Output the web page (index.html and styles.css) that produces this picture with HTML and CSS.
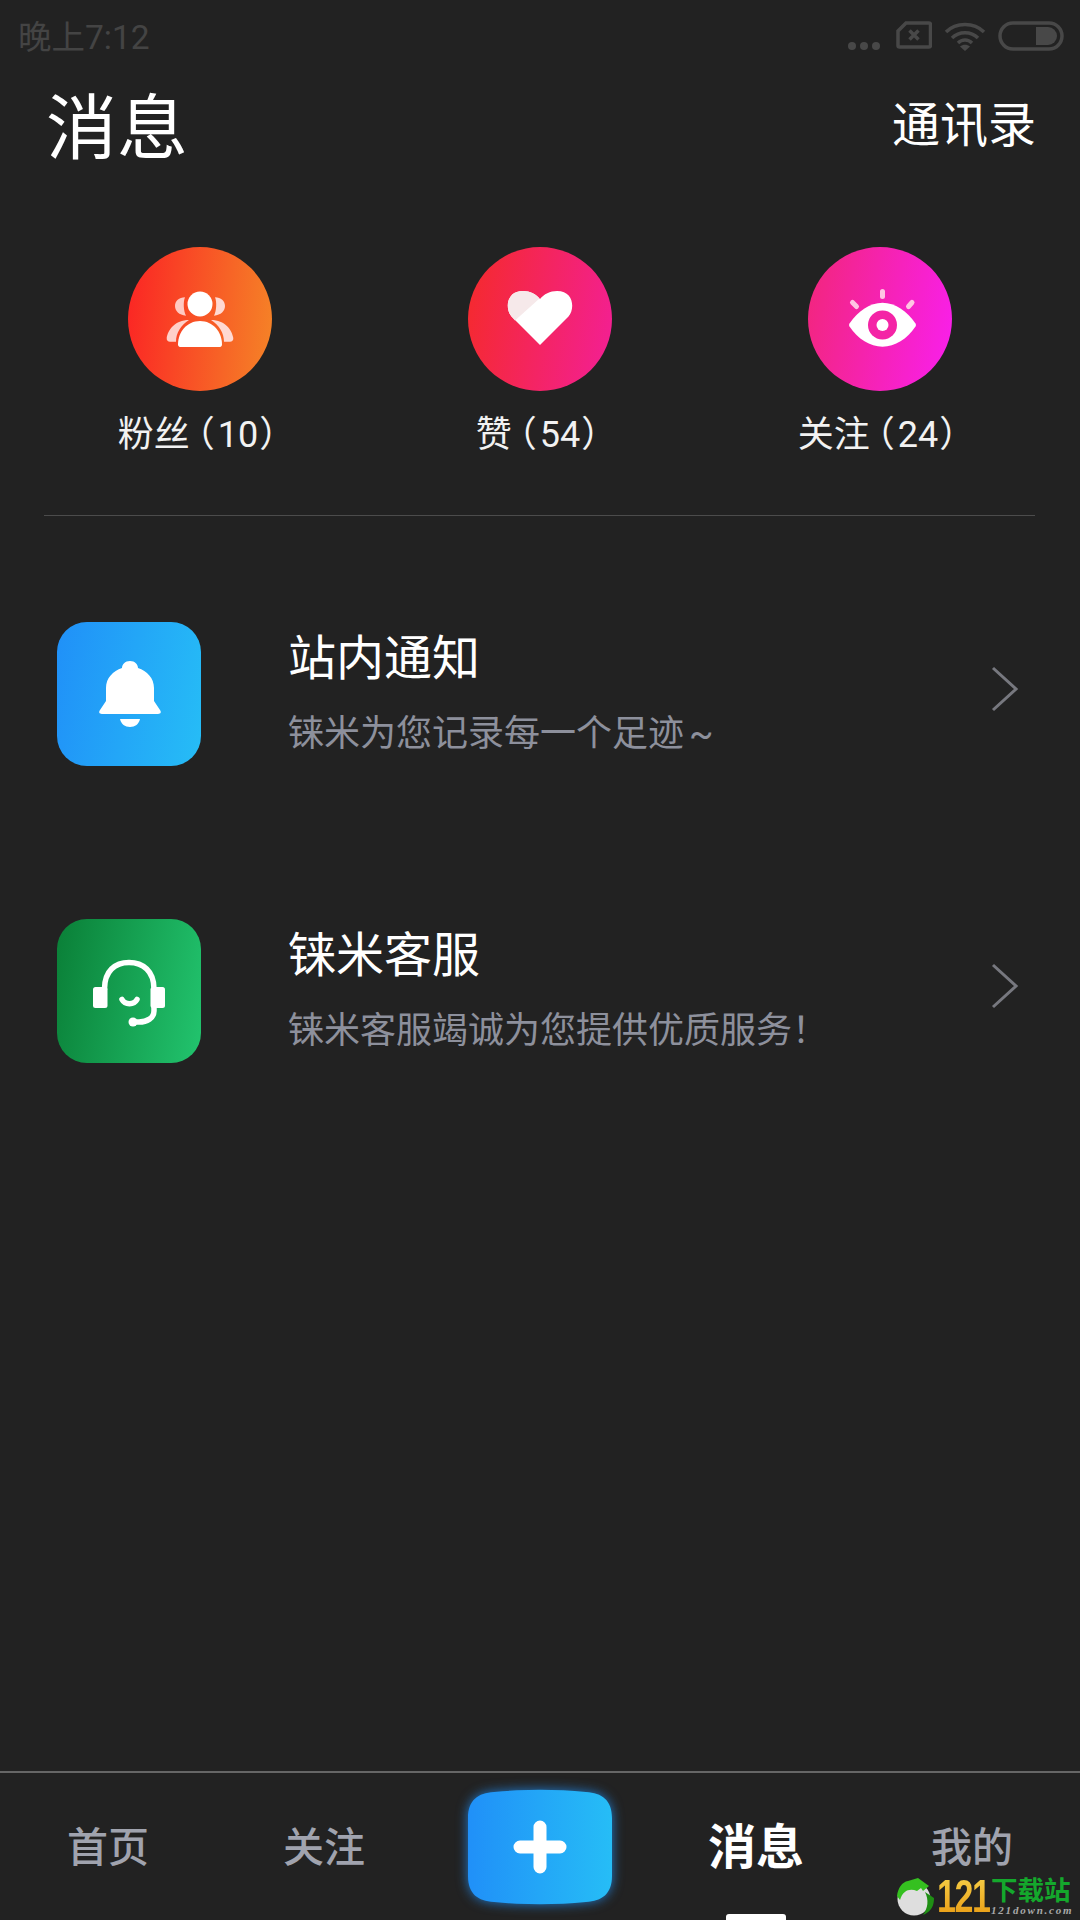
FILE: index.html
```html
<!DOCTYPE html>
<html lang="zh-CN">
<head>
  <meta charset="UTF-8">
  <meta name="viewport" content="width=device-width, initial-scale=1.0">
  <title>消息</title>
  <link rel="stylesheet" href="styles.css">
</head>
<body>
  <div class="page">
    <div class="status-bar">
      <span class="status-time">晚上7:12</span>
      <div class="status-icons">
        <svg class="ic-dots" width="34" height="10" viewBox="0 0 34 10"><circle cx="5" cy="5" r="4"/><circle cx="17" cy="5" r="4"/><circle cx="29" cy="5" r="4"/></svg>
        <svg class="ic-sim" width="36" height="28" viewBox="0 0 36 28"><path d="M10 2H33a1.500 1.500 0 0 1 1.500 1.500V24.500A1.500 1.500 0 0 1 33 26H3.500A1.500 1.500 0 0 1 2 24.500V10Z"/><path d="M13.500 9.500L22.500 18.500M22.500 9.500L13.500 18.500"/></svg>
        <svg class="ic-wifi" width="42" height="30" viewBox="0 0 42 30"><path d="M2 11C12 1 30 1 40 11M8 17C15 10 27 10 34 17M14 22C18 18 24 18 28 22"/><path class="solid" d="M21 30L16 25.500C19 23 23 23 26 25.500Z"/></svg>
        <svg class="ic-batt" width="66" height="30" viewBox="0 0 66 30"><rect x="2" y="2" width="62" height="26" rx="13"/><path class="solid" d="M38 6H50A9 9 0 0 1 59 15A9 9 0 0 1 50 24H38Z"/></svg>
      </div>
    </div>

    <header class="top">
      <h1>消息</h1>
      <span class="top-link">通讯录</span>
    </header>

    <section class="stats">
      <div class="stat">
        <div class="circle c-fans">
          <svg width="144" height="144" viewBox="0 0 144 144">
            <path fill="#ffc9c2" d="M57 50.300C51 50.300 47 54 47 59C47 64 51 68 58 68.700C55.500 64 55 55 57 50.300Z"/>
            <path fill="#ffd9d2" d="M87 50.300C93 50.300 97 54 97 59C97 64 93 68 86 68.700C88.500 64 89 55 87 50.300Z"/>
            <path fill="#ffd0c8" d="M61 73C47 73 40 83 38.700 91C38.500 93.500 40 94.700 42 94.700H48C48 86 53 78 61 73Z"/>
            <path fill="#ffd9d2" d="M83 73C97 73 104 83 105.300 91C105.500 93.500 104 94.700 102 94.700H96C96 86 91 78 83 73Z"/>
            <circle fill="#fff" cx="72" cy="57" r="12.500"/>
            <path fill="#fff" d="M72 74C59 74 50 85 50 97.500C50 99 51 100 52 100H92C93 100 94 99 94 97.500C94 85 85 74 72 74Z"/>
          </svg>
        </div>
        <span class="stat-label">粉丝<span class="paren-l">（</span>10<span class="paren-r">）</span></span>
      </div>
      <div class="stat">
        <div class="circle c-like">
          <svg width="144" height="144" viewBox="0 0 144 144">
            <path fill="#fff" d="M72 98L43.500 69.500C37 62 38 44 55 44C62 44 68 47 72 52C76 47 82 44 89 44C106 44 107 62 100.500 69.500Z"/>
            <path fill="#f6e9ea" d="M71.500 51.500C68 47 62 44 55 44C38 44 37 62 43.500 69.500L47 73.500Z"/>
          </svg>
        </div>
        <span class="stat-label">赞<span class="paren-l">（</span>54<span class="paren-r">）</span></span>
      </div>
      <div class="stat">
        <div class="circle c-follow">
          <svg width="144" height="144" viewBox="0 0 144 144">
            <path stroke="#ffc5e3" stroke-width="5" stroke-linecap="round" d="M74.500 44.500V49.500M44.500 55.500L48.500 59.500M104 55.500L100.500 59.500"/>
            <path fill="#fff" d="M41.500 76.500C50 64 62 55.700 74.500 55.700C87 55.700 99 64 107.500 76.500Q108.500 78 107.500 79.500C99 92 87 99.700 74.500 99.700C62 99.700 50 92 41.500 79.500Q40.500 78 41.500 76.500Z"/>
            <circle fill="#f424a6" cx="74.500" cy="78" r="14.500"/>
            <circle fill="#fff" cx="74.500" cy="78" r="6"/>
          </svg>
        </div>
        <span class="stat-label">关注<span class="paren-l">（</span>24<span class="paren-r">）</span></span>
      </div>
    </section>

    <div class="divider"></div>

    <section class="rows">
      <div class="row">
        <div class="tile t-blue">
          <svg width="144" height="144" viewBox="0 0 144 144">
            <path fill="#fff" d="M73 39C78 39 81 42.500 81 46C90 49 97 56 97 66V79L103 88C105 91 103 92 100 92H46C43 92 41 91 43 88L49 79V66C49 56 56 49 65 46C65 42.500 68 39 73 39Z"/>
            <path fill="#fff" d="M63 97H83C82 102 78 105 73 105C68 105 64 102 63 97Z"/>
          </svg>
        </div>
        <div class="row-text">
          <div class="row-title">站内通知</div>
          <div class="row-sub">铼米为您记录每一个足迹 ~</div>
        </div>
        <svg class="chev" width="28" height="46" viewBox="0 0 28 46"><path d="M2 2L25 23L2 44"/></svg>
      </div>
      <div class="row">
        <div class="tile t-green">
          <svg width="144" height="144" viewBox="0 0 144 144">
            <rect fill="#fff" x="36" y="68" width="14.500" height="21" rx="2.500"/>
            <rect fill="#fff" x="93.500" y="68" width="14.500" height="21" rx="2.500"/>
            <g fill="none" stroke="#fff" stroke-width="5.500" stroke-linecap="round">
              <path d="M47.500 70C47.500 52 58 43.500 72 43.500C86 43.500 97 52 97 70V92C97 99 90 103 82 103H76"/>
              <path d="M65 80.500C68 86 77 86 80 80.500"/>
            </g>
            <circle fill="#fff" cx="76" cy="103" r="4.500"/>
          </svg>
        </div>
        <div class="row-text">
          <div class="row-title">铼米客服</div>
          <div class="row-sub">铼米客服竭诚为您提供优质服务！</div>
        </div>
        <svg class="chev" width="28" height="46" viewBox="0 0 28 46"><path d="M2 2L25 23L2 44"/></svg>
      </div>
    </section>

    <nav class="tabs">
      <span class="tab">首页</span>
      <span class="tab">关注</span>
      <div class="tab-plus">
        <svg class="plus" width="164" height="134" viewBox="0 0 164 134">
          <defs>
            <linearGradient id="plusFill" x1="0" y1="0" x2="1" y2="0">
              <stop offset="0" stop-color="#2090f8"/>
              <stop offset="1" stop-color="#26bdf6"/>
            </linearGradient>
          </defs>
          <path fill="url(#plusFill)" d="M10 38C10 20 20 13 36 12C66 9 98 9 128 12C144 13 154 20 154 38V96C154 114 144 121 128 122C98 125 66 125 36 122C20 121 10 114 10 96Z"/>
          <path stroke="#fff" stroke-width="13" stroke-linecap="round" d="M82 47V87M62 67H102"/>
        </svg>
      </div>
      <span class="tab active">消息</span>
      <span class="tab">我的</span>
    </nav>

    <div class="watermark">
      <svg width="40" height="38" viewBox="0 0 40 38">
        <circle fill="#dedede" cx="18" cy="21" r="16.500"/>
        <path fill="#35c020" d="M1 18C2 10 6 4 12 3L22 0L33 8L27 13L25 10L21 13C14 10 7 12 4 22Z"/>
        <path fill="#1f8f14" d="M29 14L38 20C38 27 36 33 27 37C32 30 33 22 29 14Z"/>
      </svg>
      <span class="wm-num">121</span>
      <div class="wm-right">
        <span class="wm-cn">下载站</span>
        <span class="wm-url">121down.com</span>
      </div>
    </div>
  </div>
</body>
</html>
```

FILE: styles.css
```css
* {
  box-sizing: border-box;
  margin: 0;
  padding: 0;
}

body {
  background: #222222;
  font-family: Roboto, "Noto Sans CJK SC", sans-serif;
}

.page {
  position: relative;
  width: 1080px;
  height: 1920px;
  display: flex;
  flex-direction: column;
  overflow: hidden;
  background: #222222;
  color: #fff;
}

/* status bar */
.status-bar {
  height: 74px;
  display: flex;
  justify-content: space-between;
  padding: 16px 16px 0 18px;
  flex-shrink: 0;
}

.status-time {
  font-size: 33.5px;
  line-height: 44px;
  color: #444;
}

.status-icons {
  display: flex;
  align-items: flex-start;
  padding-top: 5px;
}

.status-icons svg {
  fill: none;
  stroke: #484848;
  stroke-width: 3.5;
}

.status-icons .solid {
  fill: #484848;
  stroke: none;
}

.ic-dots {
  fill: #484848 !important;
  stroke: none !important;
  margin-top: 20px;
  margin-right: 15px;
}

.ic-sim {
  margin-right: 12px;
}

.ic-wifi {
  margin-right: 12px;
}

/* header */
.top {
  display: flex;
  justify-content: space-between;
  align-items: center;
  height: 96px;
  padding: 0 44px 0 46px;
  flex-shrink: 0;
}

.top h1 {
  margin-top: 14px;
  font-size: 71px;
  font-weight: 400;
  line-height: 96px;
}

.top-link {
  margin-top: -2px;
  font-size: 48px;
}

/* fans / likes / follows */
.stats {
  display: grid;
  grid-template-columns: 340px 340px 340px;
  padding: 77px 0 0 30px;
}

.stat {
  display: flex;
  flex-direction: column;
  align-items: center;
}

.circle {
  width: 144px;
  height: 144px;
  border-radius: 50%;
}

.c-fans {
  background: linear-gradient(95deg, #fb2424, #f58427);
}

.c-like {
  background: linear-gradient(100deg, #f52a2a, #f31f97);
}

.c-follow {
  background: linear-gradient(100deg, #f2267a, #f91fee);
}

.stat-label {
  margin: 20px 5px 0 0;
  font-size: 36px;
  line-height: 48px;
  color: #f2f2f2;
  white-space: nowrap;
}

/* half width brackets, the app's font sets them tighter */
.paren-l,
.paren-r {
  font-feature-settings: "halt";
}

.paren-l {
  margin: 0 3px 0 7px;
}

.paren-r {
  margin-left: 1px;
}

.divider {
  height: 1px;
  margin: 56px 45px 0 44px;
  background: #4c4c4c;
}

/* list rows */
.rows {
  flex: 1;
  display: flex;
  flex-direction: column;
  gap: 153px;
  padding: 106px 45px 0 57px;
}

.row {
  display: flex;
  align-items: center;
  height: 144px;
}

.tile {
  width: 144px;
  height: 144px;
  border-radius: 30px;
  flex-shrink: 0;
}

.t-blue {
  background: linear-gradient(100deg, #2090f8, #26bdf6);
}

.t-green {
  background: linear-gradient(100deg, #0a7f37, #22c46e);
}

.row-text {
  flex: 1;
  margin: -2px 0 0 87px;
}

.row-title {
  font-size: 48px;
  line-height: 60px;
}

.row-sub {
  margin-top: 22px;
  font-size: 36px;
  line-height: 46px;
  word-spacing: -4px;
  color: #8d909c;
}

.chev {
  fill: none;
  stroke: #77787f;
  stroke-width: 3;
  margin-right: 16px;
  margin-top: -10px;
}

/* bottom tabs */
.tabs {
  height: 149px;
  flex-shrink: 0;
  display: grid;
  grid-template-columns: repeat(5, 1fr);
  align-items: center;
  border-top: 2px solid #666;
}

.tab {
  display: flex;
  justify-content: center;
  margin-top: 3px;
  font-size: 41px;
  line-height: 50px;
  font-weight: 500;
  color: #a0a3ae;
}

.tab-plus {
  display: flex;
  justify-content: center;
}

.tab.active {
  position: relative;
  font-size: 48px;
  font-weight: 700;
  color: #fff;
}

.tab.active::after {
  content: "";
  position: absolute;
  left: 78px;
  top: 91px;
  width: 60px;
  height: 6px;
  border-radius: 3px 3px 0 0;
  background: #fff;
}

.plus {
  filter: drop-shadow(0 0 6px rgba(32, 144, 248, 0.8));
}

/* download site stamp */
.watermark {
  position: absolute;
  left: 896px;
  top: 1878px;
  display: flex;
  align-items: flex-start;
}

.wm-num {
  width: 74px;
  margin: -5px -20px 0 1px;
  font-family: "Liberation Sans", sans-serif;
  font-size: 46px;
  font-weight: 700;
  line-height: 46px;
  letter-spacing: -2px;
  white-space: nowrap;
  transform: scaleX(0.74);
  transform-origin: left top;
  background: linear-gradient(180deg, #f7d24a, #e89a12);
  -webkit-background-clip: text;
  background-clip: text;
  color: transparent;
}

.wm-right {
  display: flex;
  flex-direction: column;
}

.wm-cn {
  font-size: 26.5px;
  font-weight: 700;
  line-height: 26px;
  white-space: nowrap;
  color: #14a82c;
}

.wm-url {
  font-family: "Liberation Serif", serif;
  font-size: 11px;
  font-style: italic;
  font-weight: 700;
  line-height: 12px;
  letter-spacing: 1.8px;
  white-space: nowrap;
  color: #a8a8a8;
}
```
